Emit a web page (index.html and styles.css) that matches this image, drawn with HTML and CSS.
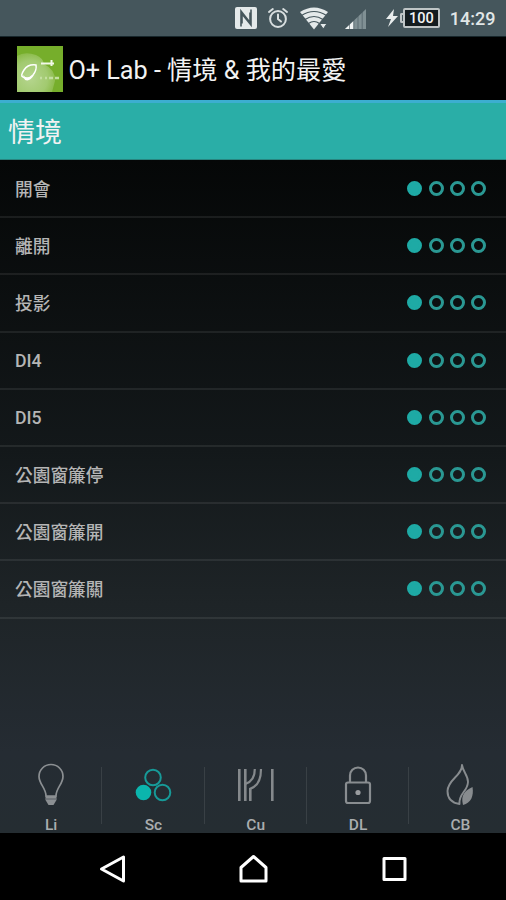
FILE: index.html
```html
<!DOCTYPE html>
<html lang="zh-Hant">
<head>
  <meta charset="UTF-8" />
  <meta name="viewport" content="width=device-width, initial-scale=1.0" />
  <title>O+ Lab</title>
  <link rel="stylesheet" href="styles.css">
</head>

<body>

<div class="status-bar">
  <!-- nfc -->
  <svg class="nfc" width="24" height="24" viewBox="0 0 24 24">
    <rect x="1" y="1" width="22" height="22" rx="2" fill="#e4e9ea" />
    <path d="M7 20.500V5L16 16.500V6.500M17 3.500v15.500L8 8v9.500" fill="none" stroke="#45565c" stroke-width="1.600" />
  </svg>
  <!-- alarm -->
  <svg class="alarm" width="22" height="22" viewBox="0 0 22 22" fill="none" stroke="#d9dfe0" stroke-width="2" stroke-linecap="round">
    <circle cx="11" cy="12" r="7.900" />
    <path d="M11 7.500V12l3 2.500M2 5l3.800-3M20 5l-3.800-3" />
  </svg>
  <!-- wifi -->
  <svg class="wifi" width="28" height="24" viewBox="0 0 28 24">
    <path d="M0 6Q14-3 28 6L14 23.500Z" fill="#e4e9ea" />
    <path d="M1.500 9.500Q14 1.500 26.500 9.500M5 13.500Q14 7.500 23 13.500M8.500 17.500Q14 13.500 19.500 17.500" fill="none" stroke="#45565c" stroke-width="1.200" />
    <path d="M19.500 17.500h7.500l-3.700 5.500z" fill="#e4e9ea" stroke="#45565c" stroke-width="1" />
  </svg>
  <!-- signal -->
  <svg class="signal" width="22" height="22" viewBox="0 0 22 22">
    <path d="M0 21L21 1v20z" fill="#809094" />
    <path d="M0 21L8.500 13v8z" fill="#f0f3f3" />
    <path d="M4.500 16v5M8.800 12v9M13 8v13M17.200 4v17" stroke="#45565c" stroke-width=".6" />
  </svg>
  <svg class="bolt" width="12" height="18" viewBox="0 0 12 18">
    <path d="M8 0L0 10h5L2 18 12 7H7z" fill="#e9eded" />
  </svg>
  <div class="battery-tip"></div>
  <div class="battery">100</div>
  <div class="time">14:29</div>
</div>

<div class="title-bar">
  <svg class="logo" width="46" height="46" viewBox="0 0 46 46">
    <defs>
      <radialGradient id="glow" cx=".35" cy=".65" r=".65">
        <stop offset="0" stop-color="#b5d58e" />
        <stop offset=".7" stop-color="#a2ca70" />
        <stop offset="1" stop-color="#8dbc4d" />
      </radialGradient>
    </defs>
    <rect width="46" height="46" fill="#76ae2b" />
    <path d="M0 10Q8 5 19 9q7 3 8 9 12 6 11 17l-3 11H0z" fill="url(#glow)" />
    <path d="M19 19q-8-1-12 5t-1 7q4 4 10-2 4-5 3-10z" fill="none" stroke="#fff" stroke-width="1.500" />
    <path d="M6 29q4 5 11 0-4 7-9 5z" fill="#fff" />
    <path d="M24 17.500h13M34.500 14v6" stroke="#f1f8e8" stroke-width="2" />
    <path d="M23 32h2m3 0h2m2 0h4m2 0h4" stroke="#c4dfa0" stroke-width="2.500" />
  </svg>
  <h1>O+ Lab - 情境 &amp; 我的最愛</h1>
</div>

<div class="section-header">情境</div>

<div class="content">
  <ul class="scenes">
    <li><span>開會</span><div class="dots"><i class="on"></i><i></i><i></i><i></i></div></li>
    <li><span>離開</span><div class="dots"><i class="on"></i><i></i><i></i><i></i></div></li>
    <li><span>投影</span><div class="dots"><i class="on"></i><i></i><i></i><i></i></div></li>
    <li><span class="latin">DI4</span><div class="dots"><i class="on"></i><i></i><i></i><i></i></div></li>
    <li><span class="latin">DI5</span><div class="dots"><i class="on"></i><i></i><i></i><i></i></div></li>
    <li><span>公園窗簾停</span><div class="dots"><i class="on"></i><i></i><i></i><i></i></div></li>
    <li><span>公園窗簾開</span><div class="dots"><i class="on"></i><i></i><i></i><i></i></div></li>
    <li><span>公園窗簾關</span><div class="dots"><i class="on"></i><i></i><i></i><i></i></div></li>
  </ul>

  <div class="tabs">
    <div class="tab">
      <svg width="40" height="44" viewBox="0 0 40 44" fill="none" stroke="#8b8f92" stroke-width="1.700">
        <path d="M15 33C15 25 8 21 8 13.500a12 12 0 0 1 24 0C32 21 25 25 25 33z" />
        <path d="M14.500 33h11v4l-3 5h-5l-3-5z" fill="#8b8f92" stroke="none" />
        <path d="M15 36h10" stroke="#595f64" stroke-width="1" />
      </svg>
      <span>Li</span>
    </div>
    <div class="tab">
      <svg width="40" height="44" viewBox="0 0 40 44" fill="none" stroke="#179a98" stroke-width="2">
        <circle cx="20" cy="14.500" r="7.800" />
        <circle cx="29.500" cy="29.500" r="7.800" />
        <circle cx="10.500" cy="29.500" r="7.800" fill="#0bb5ad" stroke="none" />
      </svg>
      <span>Sc</span>
    </div>
    <div class="tab">
      <svg width="40" height="44" viewBox="0 0 40 44" fill="none" stroke="#85898c" stroke-width="2.600">
        <path d="M3.300 6v32M9.300 6v32M14.300 38V25M36.300 6v32" />
        <path d="M18.800 6c0 8-3 13-9.500 15M25 6c0 12-4 18-11.500 20" stroke-width="2.200" />
      </svg>
      <span>Cu</span>
    </div>
    <div class="tab">
      <svg width="40" height="44" viewBox="0 0 40 44" fill="none" stroke="#898d90" stroke-width="2.200">
        <rect x="8" y="19.500" width="24" height="20.500" rx="2" />
        <path d="M12 19V12.500a8 8 0 0 1 16 0V19" />
        <circle cx="20" cy="29.500" r="2.600" fill="#9a9da0" stroke="none" />
      </svg>
      <span>DL</span>
    </div>
    <div class="tab">
      <svg width="40" height="44" viewBox="0 0 40 44" fill="none" stroke="#888c8f" stroke-width="1.900" stroke-linejoin="round">
        <path d="M22 2c0 11-14 14-14.500 26 0 8 5 12 12 13-1-11 8-12 8.500-22 0-7-5-10-6-17z" />
        <path d="M32.500 24c-8 4-12 8-9.500 18 8-2 11-9 9.500-18z" fill="#888c8f" stroke="none" />
      </svg>
      <span>CB</span>
    </div>
  </div>
</div>

<div class="nav-bar">
  <svg width="30" height="30" viewBox="0 0 30 30"><path d="M26.500 3v24L4.500 15z" /></svg>
  <svg width="30" height="30" viewBox="0 0 30 30"><path d="M15.500 2.500L28 13.500V27H3V13.500z" /></svg>
  <svg width="30" height="30" viewBox="0 0 30 30"><path d="M5 4.500h21v21H5z" /></svg>
</div>

</body>
</html>
```

FILE: styles.css
```css
* {
  margin: 0;
  padding: 0;
  box-sizing: border-box;
}

body {
  width: 506px;
  height: 900px;
  display: flex;
  flex-direction: column;
  overflow: hidden;
  background: #000;
  color: #f2f2f2;
  font-family: Roboto, "Noto Sans CJK TC", sans-serif;
}

svg {
  display: block;
  flex: none;
}

.status-bar {
  height: 37px;
  display: flex;
  align-items: center;
  justify-content: flex-end;
  padding-right: 10.500px;
  background: #45565c;
  border-bottom: 1px solid #17262b;
}

.alarm {
  margin: 0 11px 0 9px;
}

.signal {
  margin: 2px 19px 0 17px;
}

.bolt {
  margin-right: 2px;
}

.battery-tip {
  width: 3px;
  height: 10px;
  border: 2px solid #bfc5c6;
  border-right: 0;
  border-radius: 2px 0 0 2px;
}

.battery {
  width: 37px;
  height: 20px;
  border: 2px solid #bfc5c6;
  border-radius: 2px;
  background: #141c1f;
  color: #f2f4f4;
  font-size: 14.500px;
  font-weight: 500;
  line-height: 17px;
  text-align: center;
}

.time {
  margin-left: 10px;
  padding-top: 1px;
  font-size: 18px;
  line-height: 20px;
  color: #e1e6e7;
  font-weight: 500;
}

.title-bar {
  height: 63px;
  display: flex;
  align-items: center;
  padding-left: 17.400px;
}

.title-bar h1 {
  margin: 4px 0 0 5px;
  font-size: 25.200px;
  font-weight: 400;
  line-height: 36px;
  white-space: nowrap;
}

.section-header {
  height: 60px;
  padding-left: 8px;
  border-top: 3px solid #3caed0;
  border-bottom: 1px solid #28857f;
  background: #2aaea7;
  font-size: 27px;
  line-height: 61px;
}

.content {
  flex: 1;
  display: flex;
  flex-direction: column;
  justify-content: space-between;
  background: linear-gradient(#050707, #13181a 43%, #1e2427 66%, #252c33 88%, #252d32);
}

.scenes {
  padding-top: 1px;
  list-style: none;
}

.scenes li {
  height: 57.2px;
  display: flex;
  align-items: center;
  justify-content: space-between;
  padding: 0 20px 0 15px;
  border-bottom: 2px solid rgba(255, 255, 255, .08);
  color: #b5b5b5;
  font-size: 17.700px;
  font-weight: 500;
}

.scenes span {
  margin-top: -2px;
}

.scenes .latin {
  margin-top: 1px;
}

.dots {
  display: flex;
  gap: 6.200px;
}

.dots i {
  width: 15px;
  height: 15px;
  border: 3px solid #2a9893;
  border-radius: 50%;
}

.dots .on {
  background: #1eaaa5;
  border-color: #1eaaa5;
}

.tabs {
  display: flex;
  overflow: hidden;
}

.tab {
  flex: none;
  width: 102.3px;
  height: 70px;
  display: flex;
  flex-direction: column;
  align-items: center;
  background: linear-gradient(#394045, #394045) right 4px / 1px 57px no-repeat;
}

.tab span {
  margin-top: 10px;
  font-size: 15.500px;
  font-weight: 500;
  line-height: 16px;
  color: #aaadaf;
}

.nav-bar {
  height: 67px;
  display: flex;
  align-items: center;
  justify-content: center;
  gap: 111px;
  padding-top: 4px;
}

.nav-bar path {
  fill: none;
  stroke: #fff;
  stroke-width: 3;
  stroke-linejoin: round;
}
```
